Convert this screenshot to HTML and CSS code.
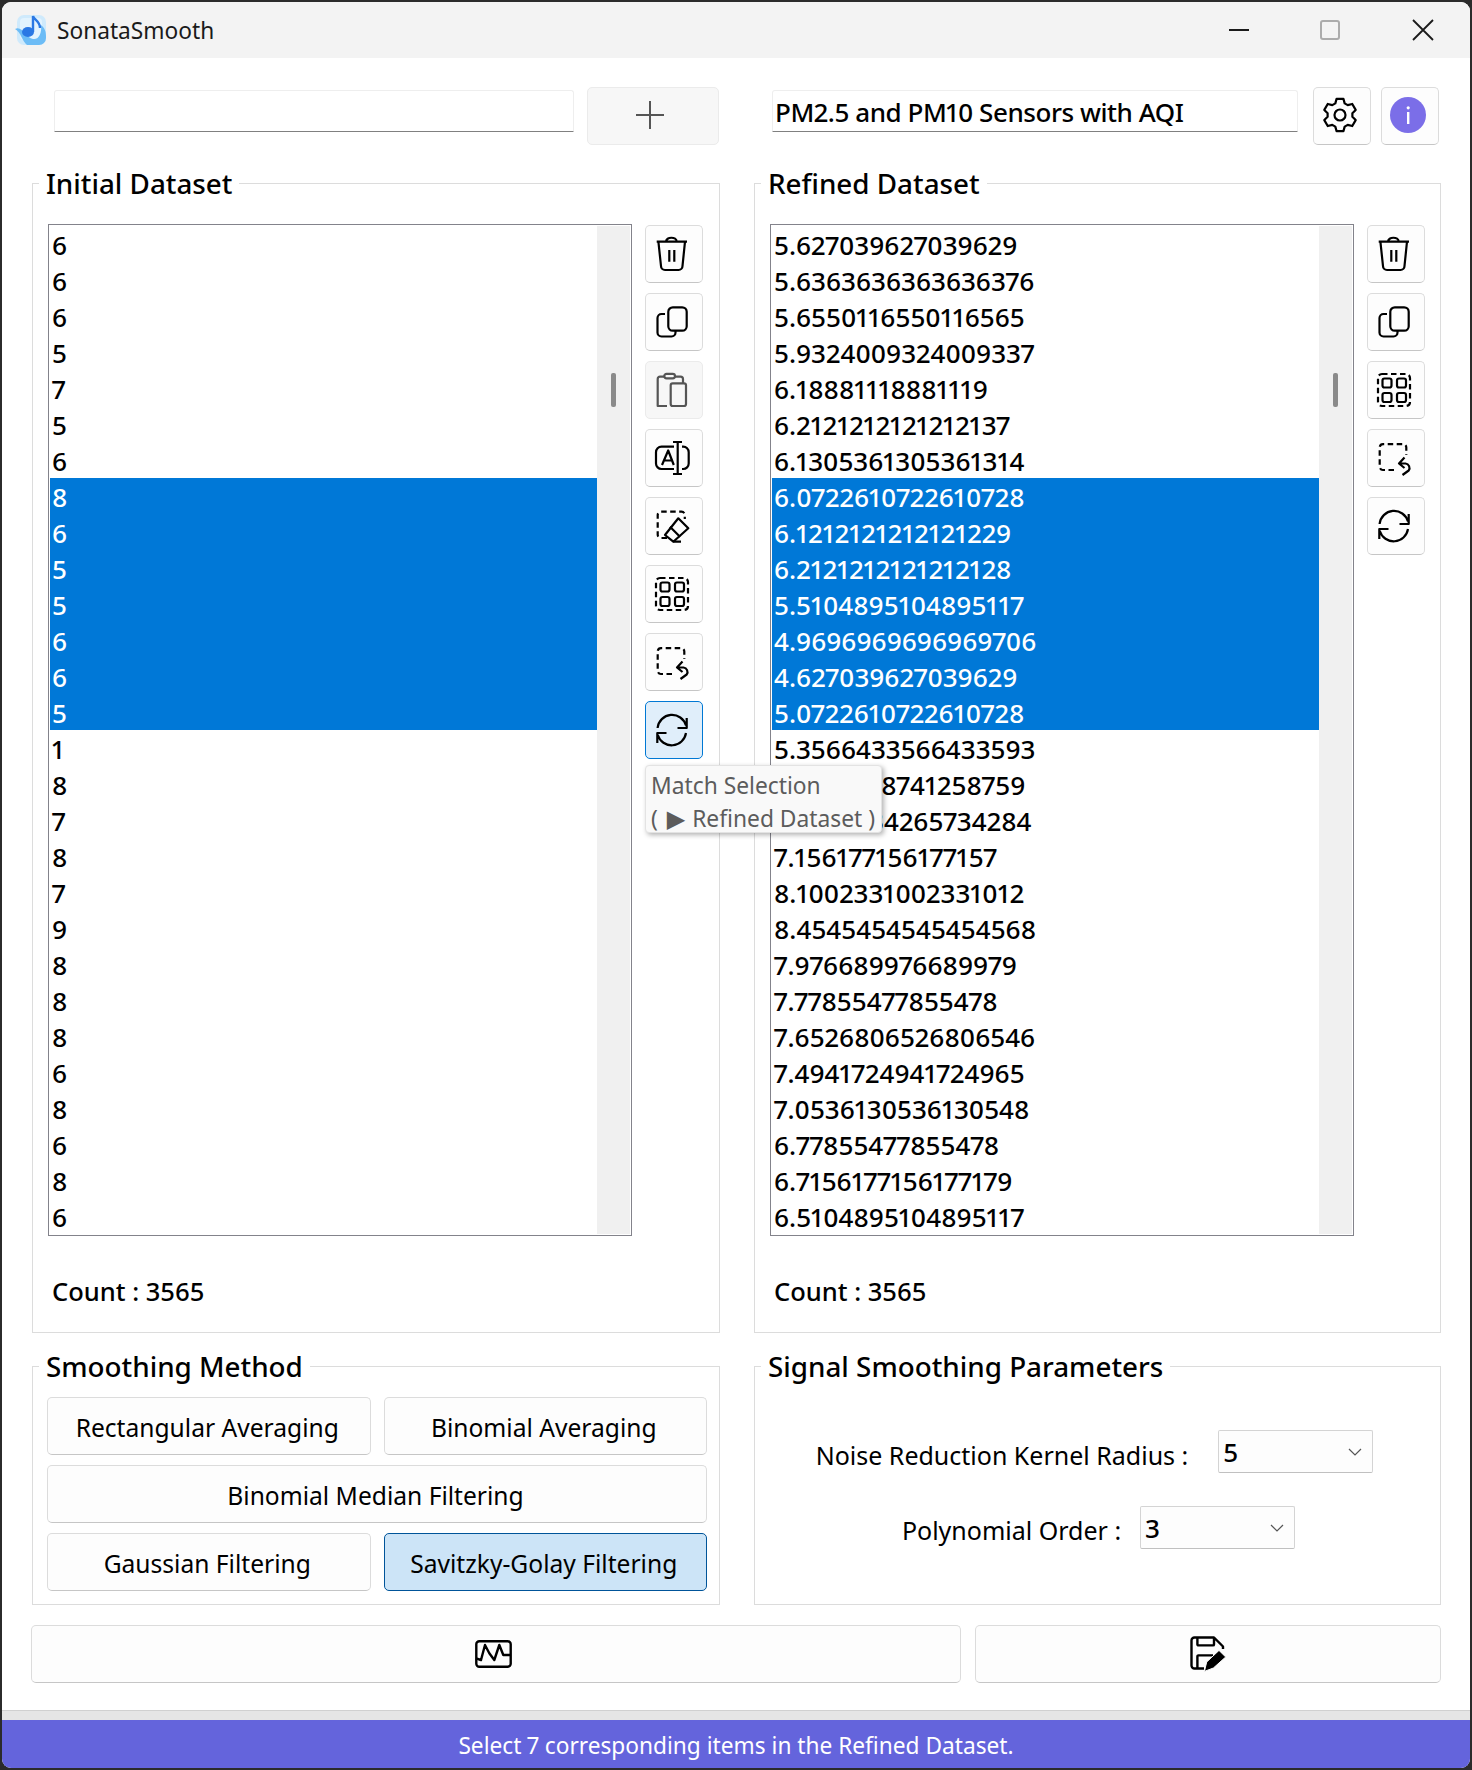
FILE: index.html
```html
<!DOCTYPE html>
<html>
<head>
    <meta charset="UTF-8">
    <title>SonataSmooth</title>
    <link rel="stylesheet" href="styles.css">
</head>
<body>
<div class="window">

    <div class="titlebar">
        <svg class="app-icon" width="32" height="32" viewBox="0 0 32 32">
            <rect x="2" y="1" width="29" height="30" rx="7" fill="#cfeafc"/>
            <rect x="5" y="4" width="22" height="22" rx="4" fill="#e2f3fe"/>
            <path d="M0 15 C7 11 11 24 18 25 C24 26 27 19 26 11 C30 14 31 18 31 22 V24 a7 7 0 0 1 -7 7 H12 C7 27 6 18 0 15 Z" fill="#6cbcf6"/>
            <ellipse cx="13" cy="18" rx="6" ry="5" fill="#2a78e4"/>
            <path d="M18 18 V2 C19 6 25 7 25 14" fill="none" stroke="#2a78e4" stroke-width="2.4"/>
        </svg>
        <span class="app-name">SonataSmooth</span>
        <div class="win-controls">
            <div class="win-btn">
                <svg width="22" height="22" viewBox="0 0 22 22"><path d="M1 11 H21" stroke="#1a1a1a" stroke-width="2"/></svg>
            </div>
            <div class="win-btn max-btn">
                <svg width="22" height="22" viewBox="0 0 22 22"><rect x="2" y="2" width="18" height="18" rx="2" fill="none" stroke="#ababab" stroke-width="2"/></svg>
            </div>
            <div class="win-btn">
                <svg width="22" height="22" viewBox="0 0 22 22"><path d="M1 1 L21 21 M21 1 L1 21" stroke="#1a1a1a" stroke-width="1.8"/></svg>
            </div>
        </div>
    </div>

    <div class="content">

        <div class="top-row">
            <div class="top-left">
                <div class="text-input"></div>
                <button class="btn add-btn disabled">
                    <svg width="28" height="28" viewBox="0 0 28 28"><path d="M14 0 V28 M0 14 H28" stroke="#555" stroke-width="2"/></svg>
                </button>
            </div>
            <div class="top-right">
                <div class="text-input title-input">PM2.5 and PM10 Sensors with AQI</div>
                <button class="btn tool-btn">
                    <svg class="icon" viewBox="0 0 34 34"><polygon points="12.32,5.41 13.57,0.86 20.43,0.86 21.68,5.41 24.7,7.15 29.26,5.96 32.69,11.9 29.38,15.26 29.38,18.74 32.69,22.1 29.26,28.04 24.7,26.85 21.68,28.59 20.43,33.14 13.57,33.14 12.32,28.59 9.3,26.85 4.74,28.04 1.31,22.1 4.62,18.74 4.62,15.26 1.31,11.9 4.74,5.96 9.3,7.15"/><circle cx="17" cy="17" r="5.5"/></svg>
                </button>
                <button class="btn tool-btn info-btn">
                    <svg width="36" height="36" viewBox="0 0 36 36"><circle cx="18" cy="18" r="18" fill="#7b6ee8"/><rect x="17" y="15" width="2.4" height="12" fill="#fff"/><circle cx="18.2" cy="10.8" r="1.6" fill="#fff"/></svg>
                </button>
            </div>
        </div>

        <div class="columns">
            <fieldset class="group data-group">
                <legend>Initial Dataset</legend>
                <div class="data-row">
                    <div class="listbox">
                        <div class="items">
                            <div class="item">6</div>
                            <div class="item">6</div>
                            <div class="item">6</div>
                            <div class="item">5</div>
                            <div class="item">7</div>
                            <div class="item">5</div>
                            <div class="item">6</div>
                            <div class="item selected">8</div>
                            <div class="item selected">6</div>
                            <div class="item selected">5</div>
                            <div class="item selected">5</div>
                            <div class="item selected">6</div>
                            <div class="item selected">6</div>
                            <div class="item selected">5</div>
                            <div class="item">1</div>
                            <div class="item">8</div>
                            <div class="item">7</div>
                            <div class="item">8</div>
                            <div class="item">7</div>
                            <div class="item">9</div>
                            <div class="item">8</div>
                            <div class="item">8</div>
                            <div class="item">8</div>
                            <div class="item">6</div>
                            <div class="item">8</div>
                            <div class="item">6</div>
                            <div class="item">8</div>
                            <div class="item">6</div>
                        </div>
                        <div class="scrollbar"><div class="thumb"></div></div>
                    </div>
                    <div class="tools">
                        <button class="btn tool-btn">
                            <svg class="icon" viewBox="0 0 34 34"><path d="M1.7 4.7 H32 M11 4.7 C11 -0.6 21.7 -0.6 21.7 4.7 M3.4 4.7 L6 29 a4 4 0 0 0 4 4 H23.5 a4 4 0 0 0 4 -4 L30 4.7 M14.3 13 V24.7 M19.3 13 V24.7"/></svg>
                        </button>
                        <button class="btn tool-btn">
                            <svg class="icon" viewBox="0 0 34 34"><rect x="13.3" y="2.3" width="18.4" height="23.4" rx="4.5"/><path d="M10 9 H6.5 a4 4 0 0 0 -4 4 V27.5 a4 4 0 0 0 4 4 H16.5 a4 4 0 0 0 4 -4 V26"/></svg>
                        </button>
                        <button class="btn tool-btn disabled">
                            <svg class="icon icon-grey" viewBox="0 0 34 34"><rect x="9.3" y="0.8" width="10.7" height="4.6" rx="2.3"/><path d="M9.3 3.7 H5 a2.3 2.3 0 0 0 -2.3 2.3 V33 H12 M20 3.7 H25.5 a2.5 2.5 0 0 1 2.5 2.5 V10"/><rect x="15.7" y="10.3" width="15.3" height="22.7" rx="2"/></svg>
                        </button>
                        <button class="btn tool-btn">
                            <svg class="icon" viewBox="0 0 34 34"><path d="M19 5.7 H6.5 a5.5 5.5 0 0 0 -5.5 5.5 V22.5 a5.5 5.5 0 0 0 5.5 5.5 H19 M27 5.7 H28.2 a5.5 5.5 0 0 1 5.5 5.5 V22.5 a5.5 5.5 0 0 1 -5.5 5.5 H27 M22.7 1 V33 M18 1 H27 M18 33 H27 M7 24 L13.2 9.5 L18.8 24 M8.8 19.5 H17"/></svg>
                        </button>
                        <button class="btn tool-btn">
                            <svg class="icon" viewBox="0 0 34 34"><path class="dash" d="M12 29 H6 a3.3 3.3 0 0 1 -3.3 -3.3 V6 a3.3 3.3 0 0 1 3.3 -3.3 H26.5 a3.3 3.3 0 0 1 3.3 3.3 V10"/><polygon points="10,26 23.3,9.3 33.3,19.3 18.3,32.7"/><path d="M15 17.7 L25 27.7 M18.3 32.7 H26"/></svg>
                        </button>
                        <button class="btn tool-btn">
                            <svg class="icon" viewBox="0 0 34 34"><rect class="dash" x="1" y="1" width="32" height="32" rx="4"/><rect x="5.5" y="5.5" width="9" height="9" rx="2"/><rect x="20" y="5.5" width="9" height="9" rx="2"/><rect x="5.5" y="20" width="9" height="9" rx="2"/><rect x="20" y="20" width="9" height="9" rx="2"/></svg>
                        </button>
                        <button class="btn tool-btn">
                            <svg class="icon" viewBox="0 0 34 34"><path class="dash" d="M17 29 H6 a3.3 3.3 0 0 1 -3.3 -3.3 V6.5 a3.3 3.3 0 0 1 3.3 -3.3 H26 a3.3 3.3 0 0 1 3.3 3.3 V14"/><path d="M27.5 16.5 L22 22.5 L27.5 27 M22 22.5 H28.5 a4.5 4.5 0 0 1 3.2 7 L25.5 34"/></svg>
                        </button>
                        <button class="btn tool-btn active">
                            <svg class="icon" viewBox="0 0 34 34"><path d="M2.6 15 A14.5 14.5 0 0 1 31 12.5 M31.7 5 V15 H22.5 M31 20 A14.5 14.5 0 0 1 2.8 22 M2.3 30 V20 H11.5"/></svg>
                        </button>
                        <div class="tooltip">Match Selection<br>( <span class="tri">▶</span> Refined Dataset )</div>
                    </div>
                </div>
                <div class="count">Count : 3565</div>
            </fieldset>

            <fieldset class="group data-group">
                <legend>Refined Dataset</legend>
                <div class="data-row">
                    <div class="listbox">
                        <div class="items">
                            <div class="item">5.627039627039629</div>
                            <div class="item">5.6363636363636376</div>
                            <div class="item">5.6550116550116565</div>
                            <div class="item">5.9324009324009337</div>
                            <div class="item">6.18881118881119</div>
                            <div class="item">6.2121212121212137</div>
                            <div class="item">6.1305361305361314</div>
                            <div class="item selected">6.0722610722610728</div>
                            <div class="item selected">6.1212121212121229</div>
                            <div class="item selected">6.2121212121212128</div>
                            <div class="item selected">5.5104895104895117</div>
                            <div class="item selected">4.9696969696969706</div>
                            <div class="item selected">4.627039627039629</div>
                            <div class="item selected">5.0722610722610728</div>
                            <div class="item">5.3566433566433593</div>
                            <div class="item">5.8741258741258759</div>
                            <div class="item">6.4265734265734284</div>
                            <div class="item">7.156177156177157</div>
                            <div class="item">8.1002331002331012</div>
                            <div class="item">8.4545454545454568</div>
                            <div class="item">7.976689976689979</div>
                            <div class="item">7.77855477855478</div>
                            <div class="item">7.6526806526806546</div>
                            <div class="item">7.4941724941724965</div>
                            <div class="item">7.0536130536130548</div>
                            <div class="item">6.77855477855478</div>
                            <div class="item">6.7156177156177179</div>
                            <div class="item">6.5104895104895117</div>
                        </div>
                        <div class="scrollbar"><div class="thumb"></div></div>
                    </div>
                    <div class="tools">
                        <button class="btn tool-btn">
                            <svg class="icon" viewBox="0 0 34 34"><path d="M1.7 4.7 H32 M11 4.7 C11 -0.6 21.7 -0.6 21.7 4.7 M3.4 4.7 L6 29 a4 4 0 0 0 4 4 H23.5 a4 4 0 0 0 4 -4 L30 4.7 M14.3 13 V24.7 M19.3 13 V24.7"/></svg>
                        </button>
                        <button class="btn tool-btn">
                            <svg class="icon" viewBox="0 0 34 34"><rect x="13.3" y="2.3" width="18.4" height="23.4" rx="4.5"/><path d="M10 9 H6.5 a4 4 0 0 0 -4 4 V27.5 a4 4 0 0 0 4 4 H16.5 a4 4 0 0 0 4 -4 V26"/></svg>
                        </button>
                        <button class="btn tool-btn">
                            <svg class="icon" viewBox="0 0 34 34"><rect class="dash" x="1" y="1" width="32" height="32" rx="4"/><rect x="5.5" y="5.5" width="9" height="9" rx="2"/><rect x="20" y="5.5" width="9" height="9" rx="2"/><rect x="5.5" y="20" width="9" height="9" rx="2"/><rect x="20" y="20" width="9" height="9" rx="2"/></svg>
                        </button>
                        <button class="btn tool-btn">
                            <svg class="icon" viewBox="0 0 34 34"><path class="dash" d="M17 29 H6 a3.3 3.3 0 0 1 -3.3 -3.3 V6.5 a3.3 3.3 0 0 1 3.3 -3.3 H26 a3.3 3.3 0 0 1 3.3 3.3 V14"/><path d="M27.5 16.5 L22 22.5 L27.5 27 M22 22.5 H28.5 a4.5 4.5 0 0 1 3.2 7 L25.5 34"/></svg>
                        </button>
                        <button class="btn tool-btn">
                            <svg class="icon" viewBox="0 0 34 34"><path d="M2.6 15 A14.5 14.5 0 0 1 31 12.5 M31.7 5 V15 H22.5 M31 20 A14.5 14.5 0 0 1 2.8 22 M2.3 30 V20 H11.5"/></svg>
                        </button>
                    </div>
                </div>
                <div class="count">Count : 3565</div>
            </fieldset>

            <fieldset class="group method-group">
                <legend>Smoothing Method</legend>
                <div class="methods">
                    <button class="btn method-btn">Rectangular Averaging</button>
                    <button class="btn method-btn">Binomial Averaging</button>
                    <button class="btn method-btn wide">Binomial Median Filtering</button>
                    <button class="btn method-btn">Gaussian Filtering</button>
                    <button class="btn method-btn checked">Savitzky-Golay Filtering</button>
                </div>
            </fieldset>

            <fieldset class="group param-group">
                <legend>Signal Smoothing Parameters</legend>
                <div class="param-row radius-row">
                    <span class="param-label">Noise Reduction Kernel Radius :</span>
                    <div class="combo">
                        <span>5</span>
                        <svg width="14" height="8" viewBox="0 0 14 8"><path d="M1 1 L7 7 L13 1" fill="none" stroke="#555" stroke-width="1.2"/></svg>
                    </div>
                </div>
                <div class="param-row order-row">
                    <span class="param-label">Polynomial Order :</span>
                    <div class="combo">
                        <span>3</span>
                        <svg width="14" height="8" viewBox="0 0 14 8"><path d="M1 1 L7 7 L13 1" fill="none" stroke="#555" stroke-width="1.2"/></svg>
                    </div>
                </div>
            </fieldset>
        </div>

        <div class="bottom-row">
            <button class="btn big-btn">
                <svg class="icon-plain" width="37" height="28" viewBox="0 0 37 28"><rect x="1.3" y="1.3" width="34.4" height="25.4" rx="3"/><path d="M1 18.3 L6 20 L10 5 L14.3 13.3 L19.3 20 L24.3 5 L28.3 15 H36"/></svg>
            </button>
            <button class="btn big-btn">
                <svg class="icon-plain" width="37" height="36" viewBox="0 0 37 36"><path d="M14 32.5 H4.5 a3 3 0 0 1 -3 -3 V4.5 a3 3 0 0 1 3 -3 H24 L33 10.5 V13 M7.4 1.5 V8.4 a1 1 0 0 0 1 1 H23 a1 1 0 0 0 1 -1 V1.5 M7.4 32 V20.4 a1 1 0 0 1 1 -1 H23"/><polygon class="pencil" points="14.4,35.4 16.7,26 29,14.4 35.7,21 23.4,32"/></svg>
            </button>
        </div>
    </div>

    <div class="footer">
        <div class="status-gap"></div>
        <div class="status">Select 7 corresponding items in the Refined Dataset.</div>
    </div>
</div>
</body>
</html>
```

FILE: styles.css
```css
* {
    box-sizing: border-box;
}

html, body {
    margin: 0;
    padding: 0;
}

body {
    width: 1472px;
    height: 1770px;
    padding: 2px;
    background-color: #2b2b2b;
    font-family: "Noto Sans", Arial, sans-serif;
    font-variant-numeric: proportional-nums;
    color: #000;
    overflow: hidden;
}

.window {
    height: 1766px;
    background-color: #fff;
    border-radius: 9px;
    overflow: hidden;
    display: flex;
    flex-direction: column;
}

/* title bar */
.titlebar {
    height: 56px;
    flex-shrink: 0;
    background-color: #f3f3f3;
    display: flex;
    align-items: center;
    padding: 0 1px 0 13px;
}

.app-icon {
    margin-right: 10px;
}

.app-name {
    font-size: 22.7px;
    color: #1a1a1a;
}

.win-controls {
    margin-left: auto;
    display: flex;
}

.win-btn {
    width: 92px;
    display: flex;
    justify-content: center;
}

.max-btn {
    padding-right: 2px;
}

/* main area */
.content {
    flex: 1;
    padding: 29px 29px 0 30px;
}

.top-row {
    display: grid;
    grid-template-columns: 688px 687px;
    column-gap: 34px;
}

.top-left,
.top-right {
    display: flex;
    height: 58px;
}

.top-left {
    padding: 0 1px 0 22px;
    gap: 13px;
}

.top-right {
    padding: 0 2px 0 18px;
    gap: 10px;
}

.text-input {
    flex: 1;
    height: 42px;
    margin-top: 3px;
    border: 1px solid #eeeeee;
    border-bottom: 1px solid #808080;
    border-radius: 3px 3px 0 0;
    font-size: 26px;
    font-weight: 500;
    letter-spacing: -0.45px;
    line-height: 42px;
    padding-left: 2px;
    white-space: nowrap;
}

.title-input {
    margin-right: 5px;
}

.btn {
    font-family: inherit;
    color: inherit;
    background-color: #fdfdfd;
    border: 1px solid #dcdcdc;
    border-bottom-color: #c6c6c6;
    border-radius: 5px;
    padding: 0;
    display: flex;
    align-items: center;
    justify-content: center;
}

.add-btn {
    width: 132px;
    padding: 0 6px 2px 0;
}

.btn.disabled {
    background-color: #f7f7f7;
    border-color: #ebebeb;
}

.tool-btn {
    width: 58px;
    height: 58px;
    flex-shrink: 0;
    padding-right: 5px;
}

.top-right .tool-btn {
    padding-bottom: 2px;
}

.info-btn {
    padding-right: 4px;
}

.icon {
    width: 34px;
    height: 34px;
    fill: none;
    stroke: #000;
    stroke-width: 2.2;
    stroke-linejoin: round;
    overflow: visible;
}

.icon-grey {
    stroke: #555;
}

.dash {
    stroke-dasharray: 5.5 3.5;
}

.btn.active {
    background-color: #e0eefa;
    border-color: #0078d4;
}

/* group boxes */
.columns {
    display: grid;
    grid-template-columns: 688px 687px;
    column-gap: 34px;
    margin-top: 20px;
}

.group {
    margin: 0;
    min-width: 0;
    border: 1px solid #dcdcdc;
    padding: 0;
}

.group legend {
    font-size: 27.8px;
    font-weight: 500;
    line-height: 36px;
    height: 36px;
    padding: 0 7px;
    margin-left: 6px;
    white-space: nowrap;
}

.data-group {
    padding: 23px 15px 23px;
}

.data-group legend {
    margin-left: -9px;
}

.data-row {
    display: flex;
    gap: 13px;
}

.listbox {
    width: 584px;
    height: 1012px;
    border: 1px solid #83838b;
    padding: 1px;
    display: flex;
}

.items {
    flex: 1;
    overflow: hidden;
}

.item {
    height: 36px;
    line-height: 38px;
    padding-left: 2px;
    font-size: 26px;
    font-weight: 500;
    white-space: nowrap;
}

.item.selected {
    background-color: #0078d7;
    color: #fff;
}

.scrollbar {
    width: 33px;
    background-color: #f0f0f0;
    display: flex;
    justify-content: center;
    flex-shrink: 0;
}

.thumb {
    width: 5px;
    height: 34px;
    margin-top: 147px;
    border-radius: 2px;
    background-color: #8a8a8a;
}

.tools {
    position: relative;
    display: flex;
    flex-direction: column;
    gap: 10px;
    padding-top: 1px;
}

.tooltip {
    position: absolute;
    z-index: 10;
    top: 541px;
    left: 0;
    width: 237px;
    height: 68px;
    padding: 3px 0 0 5px;
    font-size: 22.8px;
    line-height: 33px;
    color: #5c5c5c;
    white-space: nowrap;
    background-color: #f9f9f9;
    border: 1px solid #e3e3e3;
    border-radius: 4px;
    box-shadow: 2px 2px 5px rgba(0, 0, 0, 0.3);
}

.tri {
    font-family: "DejaVu Sans", sans-serif;
    font-size: 24px;
    line-height: 0;
    margin: 0 1px 0 3px;
}

.count {
    margin-top: 37px;
    height: 36px;
    line-height: 36px;
    padding-left: 4px;
    font-size: 25.5px;
    font-weight: 500;
}

.method-group,
.param-group {
    margin-top: 15px;
}

.method-group {
    padding: 13px 12px 13px 14px;
}

.method-group legend {
    margin-left: -8px;
}

.methods {
    display: grid;
    grid-template-columns: 1fr 1fr;
    gap: 10px 13px;
}

.method-btn {
    height: 58px;
    font-size: 24.6px;
    padding: 2px 3px 0 0;
}

.method-btn.wide {
    grid-column: 1 / 3;
}

.method-btn.checked {
    background-color: #cce4f7;
    border-color: #005499;
}

.param-group {
    padding-top: 46px;
}

.param-row {
    display: flex;
    justify-content: center;
    margin-bottom: 33px;
    height: 43px;
}

.radius-row {
    gap: 30px;
    padding-right: 6px;
}

.order-row {
    gap: 19px;
    padding-left: 2px;
}

.param-label {
    font-size: 25px;
    line-height: 50px;
}

.order-row .param-label {
    line-height: 48px;
}

.combo {
    width: 155px;
    height: 43px;
    background-color: #fdfdfd;
    border: 1px solid #d4d4d4;
    border-bottom-color: #c0c0c0;
    border-radius: 2px;
    padding: 0 10px 0 4px;
    display: flex;
    align-items: center;
    justify-content: space-between;
    font-size: 26px;
    font-weight: 500;
}

/* bottom buttons */
.bottom-row {
    display: grid;
    grid-template-columns: 930px 466px;
    column-gap: 14px;
    margin: 20px 0 0 -1px;
}

.big-btn {
    height: 58px;
}

.icon-plain {
    fill: none;
    stroke: #000;
    stroke-width: 2.4;
    stroke-linejoin: round;
    overflow: visible;
}

.big-btn:first-child .icon-plain {
    margin-right: 6px;
}

.pencil {
    fill: #000;
    stroke: #fff;
    stroke-width: 1;
}

/* status */
.footer {
    flex-shrink: 0;
}

.status-gap {
    height: 10px;
    background-color: #e5e5e5;
    border-top: 1px solid #d0d0d0;
}

.status {
    height: 48px;
    background-color: #6464dc;
    color: #fff;
    font-size: 22.7px;
    line-height: 52px;
    text-align: center;
}
```
